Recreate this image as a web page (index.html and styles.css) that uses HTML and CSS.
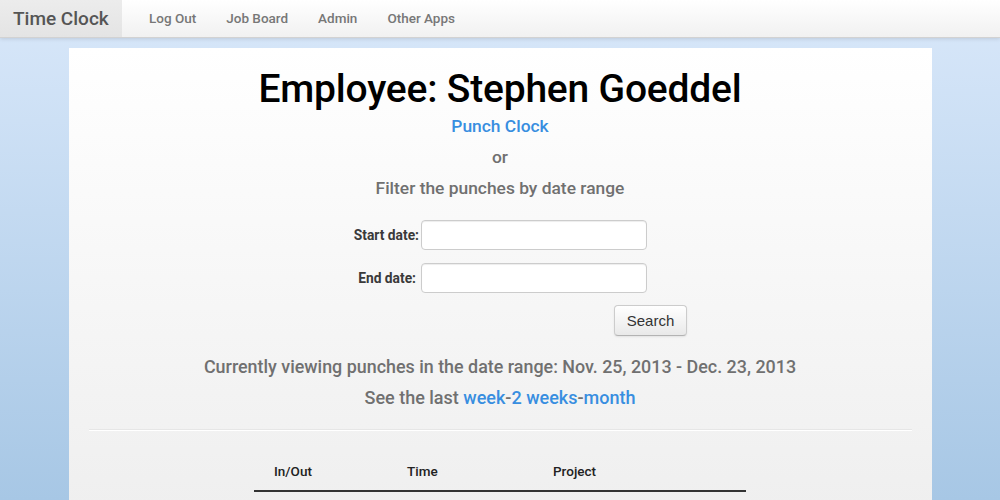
FILE: index.html
```html
<!DOCTYPE html>
<html lang="en">
<head>
  <meta charset="UTF-8">
  <title>Time Clock</title>
  <link rel="stylesheet" href="styles.css">
</head>
<body>
  <div class="navbar">
    <a href="#" class="brand">Time Clock</a>
    <ul class="nav">
      <li><a href="#">Log Out</a></li>
      <li><a href="#">Job Board</a></li>
      <li><a href="#">Admin</a></li>
      <li><a href="#">Other Apps</a></li>
    </ul>
  </div>

  <div class="container">
    <h1>Employee: Stephen Goeddel</h1>
    <p class="line"><a href="#">Punch Clock</a></p>
    <p class="line">or</p>
    <p class="line">Filter the punches by date range</p>

    <form class="filter-form">
      <div class="form-row">
        <label for="start">Start date:</label>
        <input type="text" id="start">
      </div>
      <div class="form-row">
        <label for="end" class="spaced">End date:</label>
        <input type="text" id="end">
      </div>
      <div class="form-actions">
        <button type="button">Search</button>
      </div>
    </form>

    <p class="line range">Currently viewing punches in the date range: Nov. 25, 2013 - Dec. 23, 2013</p>
    <p class="line last">See the last <a href="#">week</a>-<a href="#">2 weeks</a>-<a href="#">month</a></p>

    <hr>

    <table class="punches">
      <thead>
        <tr>
          <th class="col-inout">In/Out</th>
          <th class="col-time">Time</th>
          <th>Project</th>
        </tr>
      </thead>
      <tbody></tbody>
    </table>
  </div>
</body>
</html>
```

FILE: styles.css
```css
:root {
  --link-color: #388ee0;
  --muted: #707070;
  --nav-text: #777;
}

body {
  margin: 0;
  padding: 0;
  font-family: 'Roboto', 'Liberation Sans', sans-serif;
  background: linear-gradient(#d9e8fa, #a7c7e5) fixed;
  min-height: 100vh;
}

a {
  color: var(--link-color);
  text-decoration: none;
}

/* top bar */
.navbar {
  display: flex;
  align-items: stretch;
  height: 37px;
  background: linear-gradient(#ffffff, #f1f1f1);
  border-bottom: 1px solid #d2d2d2;
  box-shadow: 0 1px 4px rgba(0, 0, 0, 0.12);
}

.brand {
  display: flex;
  align-items: center;
  width: 122px;
  box-sizing: border-box;
  padding-left: 13px;
  padding-bottom: 1px;
  background: linear-gradient(#ececec, #e4e4e4);
  color: #555;
  font-size: 19px;
  font-weight: 500;
}

.nav {
  display: flex;
  list-style: none;
  margin: 0 0 0 12px;
  padding: 0;
}

.nav a {
  display: flex;
  align-items: center;
  height: 100%;
  padding: 0 15px 2px;
  box-sizing: border-box;
  color: var(--nav-text);
  font-size: 13.5px;
  font-weight: 500;
}

/* main card */
.container {
  width: 863px;
  margin: 10px auto 0;
  padding: 0 20px 20px;
  box-sizing: border-box;
  min-height: 460px;
  background: linear-gradient(#ffffff, #efefef 460px);
  text-align: center;
}

h1 {
  margin: 0;
  padding-top: 19px;
  font-size: 39px;
  line-height: 44px;
  font-weight: 500;
  color: #000;
  letter-spacing: -0.2px;
}

.line {
  margin: 0;
  line-height: 31px;
  font-size: 17.4px;
  font-weight: 500;
  color: var(--muted);
}

.range {
  margin-top: 15px;
  font-size: 17.9px;
}

.last {
  font-size: 18px;
}

/* date filter */
.filter-form {
  width: 360px;
  margin: 16px auto 0;
}

.form-row {
  display: flex;
  align-items: center;
  justify-content: flex-end;
  margin-bottom: 13px;
}

.form-row:nth-child(2) {
  margin-bottom: 12px;
}

.form-row label {
  font-size: 13.8px;
  font-weight: bold;
  color: #3a3a3a;
  margin-right: 2px;
}

.form-row label.spaced {
  margin-right: 5px;
}

.form-row input {
  width: 226px;
  height: 30px;
  margin-right: 33px;
  box-sizing: border-box;
  border: 1px solid #cccccc;
  border-radius: 4px;
  background: #fff;
  box-shadow: inset 0 1px 1px rgba(0, 0, 0, 0.075);
}

.form-actions {
  display: flex;
  justify-content: flex-end;
}

.form-actions button {
  width: 73px;
  height: 31px;
  margin-right: -7px;
  font-family: 'Liberation Sans', Arial, sans-serif;
  font-size: 15px;
  color: #333;
  background: linear-gradient(#ffffff, #e9e9e9);
  border: 1px solid #cccccc;
  border-bottom-color: #b3b3b3;
  border-radius: 4px;
  box-shadow: 0 1px 2px rgba(0, 0, 0, 0.08);
}

hr {
  margin: 16px 0 0;
  border: 0;
  border-top: 1px solid #e6e6e6;
  border-bottom: 1px solid #ffffff;
}

/* table */
.punches {
  width: 492px;
  margin: 20px auto 0;
  border-collapse: collapse;
  text-align: left;
}

.punches th {
  height: 39px;
  padding: 0 20px;
  font-size: 13.5px;
  font-weight: 500;
  color: #222;
  border-bottom: 2px solid #333;
}

.col-inout {
  width: 93px;
}

.col-time {
  width: 106px;
}
```
